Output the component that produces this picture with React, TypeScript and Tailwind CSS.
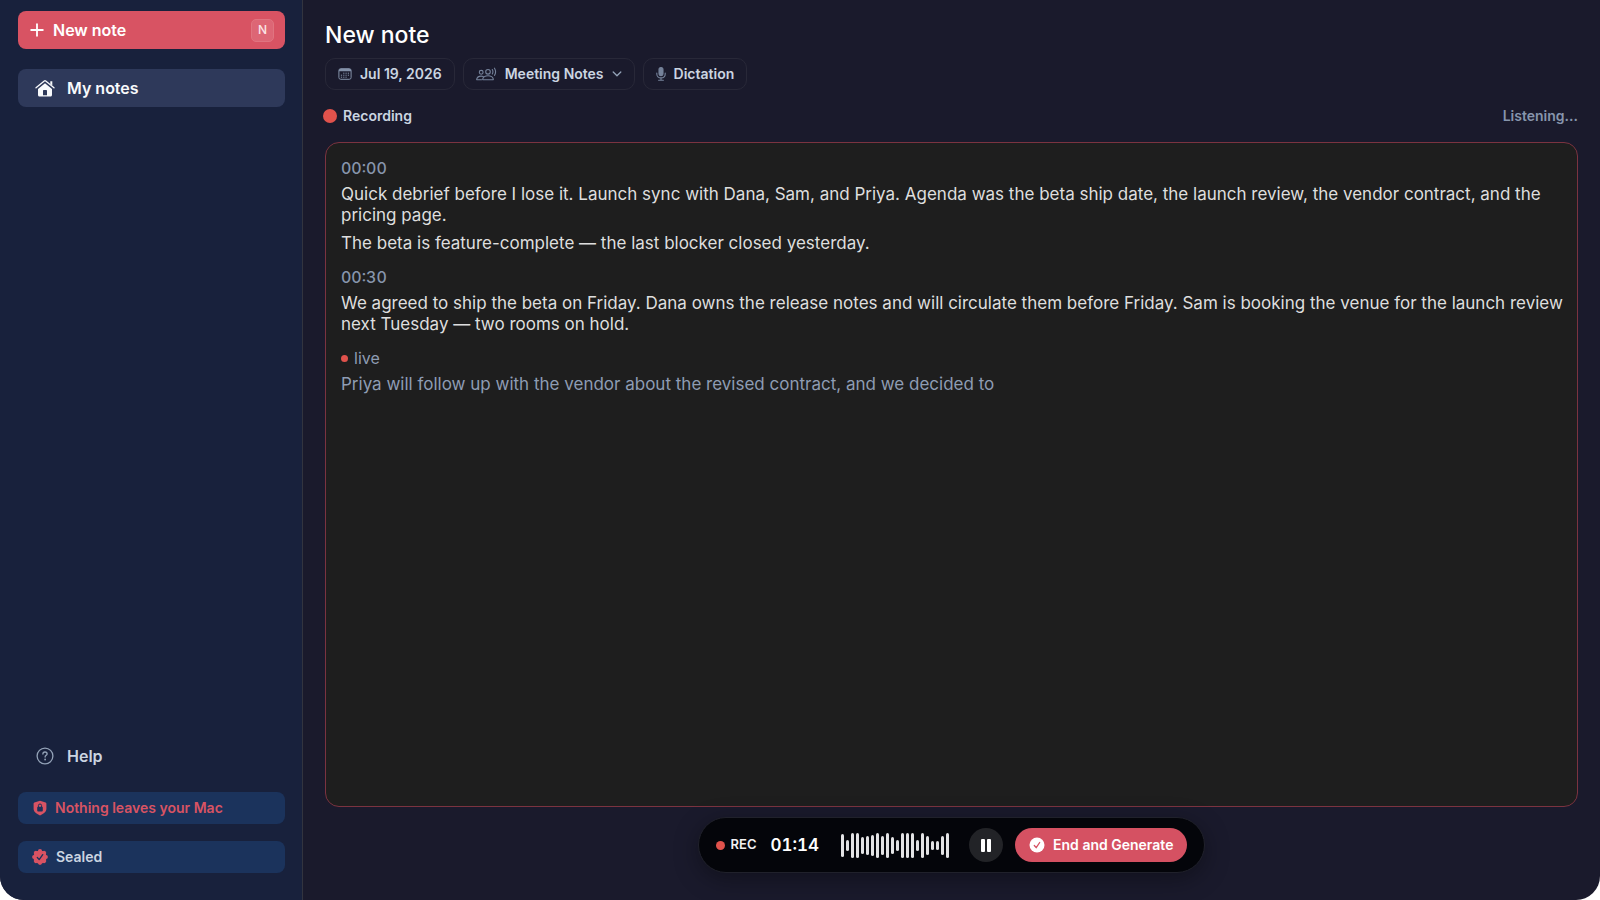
import type { ReactNode } from "react"
import { Plus } from "lucide-react"

interface TranscriptBlock {
  time: string
  lines: string[]
}

const transcript: TranscriptBlock[] = [
  {
    time: "00:00",
    lines: [
      "Quick debrief before I lose it. Launch sync with Dana, Sam, and Priya. Agenda was the beta ship date, the launch review, the vendor contract, and the pricing page.",
      "The beta is feature-complete — the last blocker closed yesterday.",
    ],
  },
  {
    time: "00:30",
    lines: [
      "We agreed to ship the beta on Friday. Dana owns the release notes and will circulate them before Friday. Sam is booking the venue for the launch review next Tuesday — two rooms on hold.",
    ],
  },
]

// Audio levels, in pixels
const levels = [23, 11, 25, 25, 17, 19, 21, 25, 19, 25, 17, 11, 25, 25, 25, 11, 25, 19, 9, 9, 19, 25]

function HouseIcon() {
  return (
    <svg viewBox="0 0 20 18" className="h-[18px] w-5" fill="none" aria-hidden="true">
      <path d="M1 8.8 9.3 1.9a1.1 1.1 0 0 1 1.4 0L19 8.8" stroke="currentColor" strokeWidth="1.3" strokeLinecap="round" />
      <path d="M15.3 2.2h2v4.4l-2-1.7z" fill="currentColor" />
      <path
        d="M10 4.2 3 10v6.1c0 .9.6 1.5 1.5 1.5h11c.9 0 1.5-.6 1.5-1.5V10zM8 16.2v-4.5c0-.4.3-.7.7-.7h2.6c.4 0 .7.3.7.7v4.5z"
        fill="currentColor"
        fillRule="evenodd"
      />
    </svg>
  )
}

function HelpIcon() {
  return (
    <svg viewBox="0 0 18 18" className="size-[18px]" fill="none" stroke="currentColor" strokeLinecap="round" aria-hidden="true">
      <circle cx="9" cy="9" r="7.9" strokeWidth="1.3" />
      <path d="M6.9 7c0-1.2.9-2 2.1-2s2.1.8 2.1 1.9c0 1.4-2 1.5-2 3.1" strokeWidth="1.3" />
      <circle cx="9.1" cy="12.5" r=".9" fill="currentColor" stroke="none" />
    </svg>
  )
}

function ShieldIcon() {
  return (
    <svg viewBox="0 0 14 16" className="h-4 w-3.5" aria-hidden="true">
      <path
        d="M7 .8 12.6 2.6q.8.3.8 1.2v5c0 3-2.500 5-6.400 6.600C3.100 13.800.6 11.800.6 8.800v-5q0-.9.800-1.200z"
        fill="currentColor"
      />
      <path d="M5.400 7.200V5.600a1.600 1.600 0 0 1 3.200 0v1.600" fill="none" stroke="#1b335c" strokeWidth="1" />
      <rect x="4.200" y="6.800" width="5.600" height="4.600" rx=".9" fill="#1b335c" />
    </svg>
  )
}

function SealIcon() {
  return (
    <svg viewBox="0 0 16 16" className="size-4" aria-hidden="true">
      <g fill="currentColor">
        <circle cx="8" cy="8" r="6.6" />
        {[0, 45, 90, 135, 180, 225, 270, 315].map((angle) => (
          <circle key={angle} cx="8" cy="2.2" r="2.1" transform={`rotate(${angle} 8 8)`} />
        ))}
      </g>
      <path d="m5.3 8.5 1.9 2.1 3.5-5" fill="none" stroke="#1b335c" strokeWidth="1.3" strokeLinecap="round" strokeLinejoin="round" />
    </svg>
  )
}

function CalendarIcon() {
  return (
    <svg viewBox="0 0 14 12" className="h-3 w-3.5" aria-hidden="true">
      <rect x=".9" y=".7" width="12.2" height="10.6" rx="1.8" fill="none" stroke="currentColor" strokeWidth="1" />
      <path d="M.9 3.2v-.7C.9 1.500 1.700.7 2.700.7h8.600c1 0 1.800.8 1.800 1.800v.7z" fill="currentColor" />
      <path d="M5.200 5.200h6M2.900 7.200h8.300M2.900 9.200h6" stroke="currentColor" strokeWidth="1" strokeDasharray="1.2 1.1" />
    </svg>
  )
}

function PeopleIcon() {
  return (
    <svg viewBox="0 0 21 14" className="h-3.5 w-[21px]" fill="none" stroke="currentColor" strokeWidth="1.1" strokeLinecap="round" aria-hidden="true">
      <circle cx="5.2" cy="5.3" r="1.9" />
      <path d="M5.5 12.8H1.200c-.5 0-.6-.3-.5-.7.500-1.800 2.200-3 4.300-3 .9 0 1.700.2 2.300.5" />
      <circle cx="12" cy="4.8" r="2.3" />
      <path d="M7.200 12.800h9.600c.4 0 .6-.3.500-.7-.5-2-2.600-3.300-5.300-3.300s-4.800 1.300-5.300 3.300c-.1.400.1.700.5.700z" />
      <path d="M16.300 2.600c.8 1.400.8 3 0 4.400M18.500 1.200c1.400 2.300 1.400 4.900 0 7.200" />
    </svg>
  )
}

function MicIcon() {
  return (
    <svg viewBox="0 0 10 14" className="h-3.5 w-2.5" fill="none" stroke="currentColor" strokeWidth="1.1" strokeLinecap="round" aria-hidden="true">
      <rect x="3" y=".6" width="4" height="8" rx="2" fill="currentColor" />
      <path d="M.8 6v1c0 2.300 1.700 3.900 4.200 3.900S9.200 9.300 9.200 7V6M5 10.900v2.400M2.600 13.300h4.800" />
    </svg>
  )
}

function ChevronIcon() {
  return (
    <svg viewBox="0 0 10 6" className="h-1.5 w-2.5" fill="none" aria-hidden="true">
      <path d="m1.200 1 3.800 3.800L8.800 1" stroke="currentColor" strokeWidth="1.3" strokeLinecap="round" strokeLinejoin="round" />
    </svg>
  )
}

function Chip({ children }: { children: ReactNode }) {
  return (
    <button
      type="button"
      className="flex h-8 items-center gap-2 rounded-[10px] border border-[#282838] px-3 text-sm font-semibold text-[#cbd5e1]"
    >
      {children}
    </button>
  )
}

function Sidebar() {
  return (
    <aside className="flex w-[303px] shrink-0 flex-col border-r border-[#32343f] bg-[#18213c] pt-[11px] pr-[17px] pb-[27px] pl-[18px]">
      <button
        type="button"
        className="flex h-[38px] items-center gap-1.5 rounded-lg bg-[#d85363] pr-[11px] pl-[9px] text-base font-semibold text-white"
      >
        <Plus className="size-5" strokeWidth={2.2} />
        New note
        <kbd className="ml-auto flex size-[23px] items-center justify-center rounded-[5px] border border-[#e07480] bg-[#dd6675] font-[inherit] text-xs font-medium text-[#fbe4e7]">
          N
        </kbd>
      </button>

      <nav className="flex flex-1 flex-col justify-between pt-5">
        <a href="#notes" className="flex h-[38px] items-center gap-3 rounded-lg bg-[#2e395a] pl-[17px] text-base font-semibold text-[#f8fafc]">
          <HouseIcon />
          My notes
        </a>
        <a href="#help" className="flex h-[38px] items-center gap-3 rounded-lg pl-[18px] text-base font-semibold text-[#cbd5e1]">
          <span className="pr-px text-[#94a3b8]">
            <HelpIcon />
          </span>
          Help
        </a>
      </nav>

      <div className="mt-[17px] flex flex-col gap-[17px] text-sm font-semibold">
        <div className="flex h-8 items-center gap-2 rounded-lg bg-[#1b335c] pl-[15px] text-[#d85363]">
          <ShieldIcon />
          Nothing leaves your Mac
        </div>
        <div className="flex h-8 items-center gap-2 rounded-lg bg-[#1b335c] pl-3.5 text-[#cbd5e1]">
          <span className="text-[#d85363]">
            <SealIcon />
          </span>
          Sealed
        </div>
      </div>
    </aside>
  )
}

function RecorderBar() {
  return (
    <div className="mx-auto mt-2.5 flex h-14 items-center rounded-full border border-[#20212b] bg-[#04050a] px-[17px] shadow-[0_6px_24px_rgba(0,0,0,0.35)]">
      <span className="size-[9px] rounded-full bg-[#e0524c]" />
      <span className="ml-1.5 text-[13px] font-semibold text-[#f1f1f3]">REC</span>
      <time className="ml-3.5 text-[17px] leading-5 font-semibold text-white tabular-nums">01:14</time>
      <div className="ml-[22px] flex items-center gap-0.5">
        {levels.map((level, i) => (
          <span key={i} className="w-[3px] rounded-full bg-[#e3e3e5]" style={{ height: level }} />
        ))}
      </div>
      <button type="button" aria-label="Pause" className="ml-5 flex size-[34px] items-center justify-center gap-0.5 rounded-full bg-[#222327]">
        <span className="h-[13px] w-1 rounded-[1px] bg-white" />
        <span className="h-[13px] w-1 rounded-[1px] bg-white" />
      </button>
      <button
        type="button"
        className="ml-3 flex h-[34px] items-center gap-2 rounded-full bg-[#d55162] px-3.5 text-sm font-semibold text-white"
      >
        <svg viewBox="0 0 16 16" className="size-4" aria-hidden="true">
          <circle cx="8" cy="8" r="7.5" fill="white" />
          <path d="m5.3 8.5 1.9 2.2 3.5-5.2" fill="none" stroke="#d55162" strokeWidth="1.3" strokeLinecap="round" strokeLinejoin="round" />
        </svg>
        End and Generate
      </button>
    </div>
  )
}

export default function App() {
  return (
    <div className="flex h-screen overflow-hidden rounded-b-3xl bg-[#1a1a2c] font-['Inter',sans-serif]">
      <Sidebar />

      <main className="flex min-w-0 flex-1 flex-col px-[22px] pt-5 pb-[27px]">
        <h1 className="text-[23px] leading-[30px] font-medium text-white">New note</h1>

        <div className="mt-2 flex gap-2">
          <Chip>
            <span className="text-[#8391a8]">
              <CalendarIcon />
            </span>
            Jul 19, 2026
          </Chip>
          <Chip>
            <span className="text-[#75829a]">
              <PeopleIcon />
            </span>
            Meeting Notes
            <span className="text-[#94a3b8]">
              <ChevronIcon />
            </span>
          </Chip>
          <Chip>
            <span className="text-[#75829a]">
              <MicIcon />
            </span>
            Dictation
          </Chip>
        </div>

        <div className="mt-4 -ml-0.5 flex items-center gap-1.5 text-sm leading-5 font-semibold">
          <span className="size-3.5 rounded-full bg-[#e0524c]" />
          <span className="text-[#cbd5e1]">Recording</span>
          <span className="ml-auto text-[#8795ac]">Listening...</span>
        </div>

        <section className="mt-4 flex-1 rounded-[14px] border border-[#7b3340] bg-[#1e1e1e] pt-[15px] pr-2 pl-[15px] text-[17px] leading-[21px] text-[#dedede]">
          {transcript.map((block) => (
            <div key={block.time} className="mb-[13px]">
              <time className="mb-[5px] block text-base leading-[21px] font-medium text-[#8795ac] tabular-nums">{block.time}</time>
              {block.lines.map((line) => (
                <p key={line} className="mb-[7px]">
                  {line}
                </p>
              ))}
            </div>
          ))}
          <div className="text-[#8e9cb3]">
            <div className="mb-[5px] flex items-center gap-1.5 text-base leading-[21px]">
              <span className="size-[7px] rounded-full bg-[#e0524c]" />
              live
            </div>
            <p>Priya will follow up with the vendor about the revised contract, and we decided to</p>
          </div>
        </section>

        <RecorderBar />
      </main>
    </div>
  )
}
